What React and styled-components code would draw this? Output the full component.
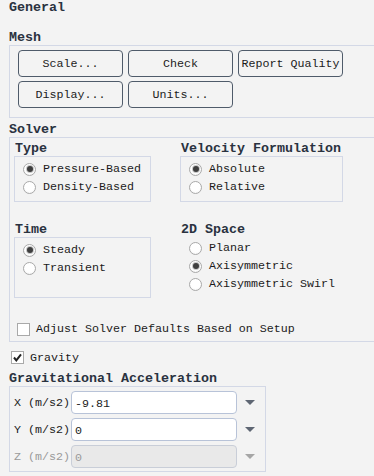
import React from 'react';
import styled, { createGlobalStyle } from 'styled-components';

const GlobalStyle = createGlobalStyle`
  html, body {
    margin: 0;
    padding: 0;
    background: #f3f3f3;
    overflow: hidden;
  }
  body {
    font-family: 'Liberation Mono', 'DejaVu Sans Mono', monospace;
    font-size: 11.67px;
    color: #1b1b1b;
  }
`;

const Page = styled.div`
  width: 380px;
  height: 476px;
  padding-left: 9px;
  box-sizing: border-box;
`;

const Title = styled.div`
  font-weight: bold;
  font-size: 13.33px;
  line-height: 15px;
  height: 15px;
  color: #2a3240;
  margin-top: ${(p) => p.$top || 0}px;
`;

const Group = styled.div`
  border: 1px solid #d3d8e6;
  border-right: none;
  box-sizing: border-box;
  padding: ${(p) => p.$pad || '0'};
  width: ${(p) => (p.$width ? `${p.$width}px` : 'auto')};
`;

const ButtonGrid = styled.div`
  display: grid;
  grid-template-columns: repeat(3, 105px);
  column-gap: 5px;
  row-gap: 4px;
`;

const Button = styled.button`
  height: 27px;
  padding: 0;
  border: 1px solid #4f5b6a;
  border-radius: 4px;
  background: #f3f3f3;
  font-family: inherit;
  font-size: 11.67px;
  color: #1b1b1b;
`;

const SolverGrid = styled.div`
  display: grid;
  grid-template-columns: 137px 163px;
  column-gap: 29px;
  row-gap: 20px;
`;

const Column = styled.div`
  display: flex;
  flex-direction: column;
`;

const SubTitle = styled(Title)`
  margin-left: 1px;
`;

const OptionBox = styled.div`
  border: ${(p) => (p.$plain ? '1px solid transparent' : '1px solid #d3d8e6')};
  height: ${(p) => p.$height}px;
  box-sizing: border-box;
  padding: ${(p) => (p.$plain ? '1px 0 0 8px' : '3px 0 0 8px')};
`;

const RadioRow = styled.div`
  display: flex;
  align-items: center;
  height: 18px;
  gap: 7px;
`;

const RadioCircle = styled.span`
  width: 13px;
  height: 13px;
  border-radius: 50%;
  box-sizing: border-box;
  border: 1px solid #a9a9a9;
  background: radial-gradient(circle at 50% 40%, #ffffff 55%, #ececec 100%);
  display: flex;
  align-items: center;
  justify-content: center;
  flex-shrink: 0;
  &::after {
    content: '';
    width: 6px;
    height: 6px;
    border-radius: 50%;
    background: ${(p) => (p.$on ? '#3e3e3e' : 'transparent')};
    box-shadow: ${(p) => (p.$on ? '0 0 0 1px #c8c8c8' : 'none')};
  }
`;

const Radio = ({ on, children }) => (
  <RadioRow>
    <RadioCircle $on={on} />
    <span>{children}</span>
  </RadioRow>
);

const CheckRow = styled.div`
  display: flex;
  align-items: center;
  height: ${(p) => p.$height || 18}px;
  gap: 6px;
  padding-left: ${(p) => p.$indent || 0}px;
  margin-top: ${(p) => p.$top || 0}px;
`;

const CheckBox = styled.span`
  width: 13px;
  height: 13px;
  box-sizing: border-box;
  border: 1px solid #a9a9a9;
  background: #fff;
  display: flex;
  align-items: center;
  justify-content: center;
  flex-shrink: 0;
`;

const Check = ({ on, children, ...rest }) => (
  <CheckRow {...rest}>
    <CheckBox>
      {on && (
        <svg width="11" height="11" viewBox="0 0 11 11">
          <path d="M2 5.5 L4.3 8.3 L9 2.3" fill="none" stroke="#222" strokeWidth="2" />
        </svg>
      )}
    </CheckBox>
    <span>{children}</span>
  </CheckRow>
);

const FieldRows = styled.div`
  display: flex;
  flex-direction: column;
  gap: 4px;
`;

const FieldRow = styled.div`
  display: flex;
  align-items: center;
  height: 23px;
`;

const FieldLabel = styled.span`
  width: 57px;
  color: ${(p) => (p.$disabled ? '#9a9a9a' : '#1b1b1b')};
`;

const Input = styled.input`
  width: 166px;
  height: 23px;
  box-sizing: border-box;
  border: 1px solid ${(p) => (p.disabled ? '#c9ced8' : '#b8c3d8')};
  border-radius: 4px;
  background: ${(p) => (p.disabled ? '#e9e9e9' : '#fff')};
  font-family: inherit;
  font-size: 11.67px;
  color: ${(p) => (p.disabled ? '#9a9a9a' : '#1b1b1b')};
  padding: 3px 0 0 3px;
  margin: 0;
  outline: none;
`;

const Arrow = styled.span`
  margin-left: 8px;
  width: 0;
  height: 0;
  border-left: 5px solid transparent;
  border-right: 5px solid transparent;
  border-top: 5px solid ${(p) => (p.$disabled ? '#a6a6a6' : '#5e6673')};
`;

const Field = ({ label, value, disabled }) => (
  <FieldRow>
    <FieldLabel $disabled={disabled}>{label}</FieldLabel>
    <Input value={value} disabled={disabled} readOnly />
    <Arrow $disabled={disabled} />
  </FieldRow>
);

export default function App() {
  return (
    <Page>
      <GlobalStyle />
      <Title>General</Title>

      <Title $top={15}>Mesh</Title>
      <Group $pad="4px 0 9px 8px">
        <ButtonGrid>
          <Button>Scale...</Button>
          <Button>Check</Button>
          <Button>Report Quality</Button>
          <Button>Display...</Button>
          <Button>Units...</Button>
        </ButtonGrid>
      </Group>

      <Title $top={4}>Solver</Title>
      <Group $pad="3px 0 3px 4px">
        <SolverGrid>
          <Column>
            <SubTitle>Type</SubTitle>
            <OptionBox $height={46}>
              <Radio on>Pressure-Based</Radio>
              <Radio>Density-Based</Radio>
            </OptionBox>
          </Column>
          <Column>
            <SubTitle>Velocity Formulation</SubTitle>
            <OptionBox $height={46}>
              <Radio on>Absolute</Radio>
              <Radio>Relative</Radio>
            </OptionBox>
          </Column>
          <Column>
            <SubTitle>Time</SubTitle>
            <OptionBox $height={61}>
              <Radio on>Steady</Radio>
              <Radio>Transient</Radio>
            </OptionBox>
          </Column>
          <Column>
            <SubTitle>2D Space</SubTitle>
            <OptionBox $plain $height={61}>
              <Radio>Planar</Radio>
              <Radio on>Axisymmetric</Radio>
              <Radio>Axisymmetric Swirl</Radio>
            </OptionBox>
          </Column>
        </SolverGrid>
        <Check $top={22} $indent={3}>Adjust Solver Defaults Based on Setup</Check>
      </Group>

      <Check on $top={6} $indent={2} $height={19}>Gravity</Check>

      <Title $top={4}>Gravitational Acceleration</Title>
      <Group $width={257} $pad="4px 0 3px 4px" style={{ borderRight: '1px solid #d3d8e6' }}>
        <FieldRows>
          <Field label="X (m/s2)" value="-9.81" />
          <Field label="Y (m/s2)" value="0" />
          <Field label="Z (m/s2)" value="0" disabled />
        </FieldRows>
      </Group>
    </Page>
  );
}
